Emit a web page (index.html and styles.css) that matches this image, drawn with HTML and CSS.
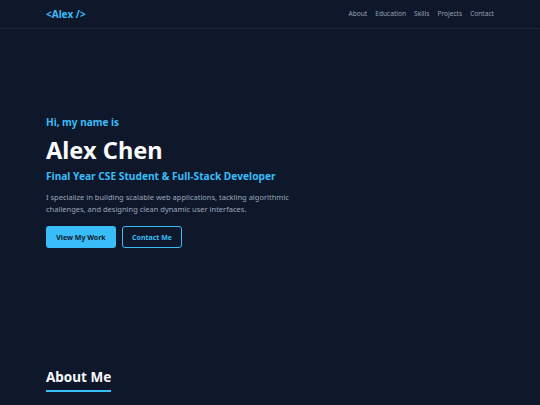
FILE: index.html
```html
<!DOCTYPE html>
<html lang="en">
<head>
<meta charset="utf-8">
<title>Alex Chen</title>
<link rel="stylesheet" href="styles.css">
</head>
<body>
<header class="nav">
  <div class="nav-inner">
    <a class="logo" href="#">&lt;Alex /&gt;</a>
    <nav class="links">
      <a href="#about">About</a>
      <a href="#education">Education</a>
      <a href="#skills">Skills</a>
      <a href="#projects">Projects</a>
      <a href="#contact">Contact</a>
    </nav>
  </div>
</header>
<main>
  <section class="hero">
    <p class="hi">Hi, my name is</p>
    <h1 class="name">Alex Chen</h1>
    <h2 class="role">Final Year CSE Student &amp; Full-Stack Developer</h2>
    <p class="desc">I specialize in building scalable web applications, tackling algorithmic challenges, and designing clean dynamic user interfaces.</p>
    <div class="actions">
      <a class="btn primary" href="#projects">View My Work</a>
      <a class="btn outline" href="#contact">Contact Me</a>
    </div>
  </section>
  <section class="about" id="about">
    <h2 class="section-title">About Me</h2>
  </section>
</main>
</body>
</html>
```
FILE: styles.css
```css
* { box-sizing: border-box; }
html, body { margin: 0; padding: 0; }
body {
  background: #0f172a;
  font-family: "Noto Sans", "Open Sans", sans-serif;
  color: #e2e8f0;
  width: 540px;
  height: 405px;
  overflow: hidden;
}
a { text-decoration: none; }
.nav {
  height: 29px;
  border-bottom: 1px solid #1e293b;
}
.nav-inner {
  height: 27px;
  padding: 0 46px;
  display: flex;
  align-items: center;
  justify-content: space-between;
}
.logo {
  color: #38bdf8;
  font-weight: 700;
  font-size: 10px;
}
.links {
  display: flex;
  gap: 8px;
}
.links a {
  color: #94a3b8;
  font-size: 6.6px;
}
.hero {
  padding: 86px 46px 0;
  height: 336px;
}
.hi {
  margin: 0;
  color: #38bdf8;
  font-weight: 700;
  font-size: 10px;
  line-height: 14px;
}
.name {
  margin: 6px 0 0;
  color: #f8fafc;
  font-size: 23.6px;
  font-weight: 700;
  line-height: 30px;
}
.role {
  margin: 4px 0 0;
  color: #38bdf8;
  font-size: 10.2px;
  font-weight: 700;
  line-height: 15px;
}
.desc {
  margin: 7px 0 0;
  color: #9aa8bc;
  font-size: 7.5px;
  line-height: 12px;
  max-width: 250px;
}
.actions {
  margin-top: 11px;
  display: flex;
  gap: 6px;
}
.btn {
  display: flex;
  align-items: center;
  justify-content: center;
  height: 22px;
  border-radius: 3px;
  font-size: 7px;
  font-weight: 700;
}
.primary {
  width: 70px;
  background: #38bdf8;
  color: #0f172a;
}
.outline {
  width: 60px;
  border: 1px solid #38bdf8;
  color: #38bdf8;
}
.about {
  padding: 0 46px;
}
.section-title {
  display: inline-block;
  margin: 0;
  color: #f8fafc;
  font-size: 13.5px;
  font-weight: 700;
  line-height: 20px;
  padding-bottom: 3px;
  border-bottom: 2px solid #38bdf8;
}
```
